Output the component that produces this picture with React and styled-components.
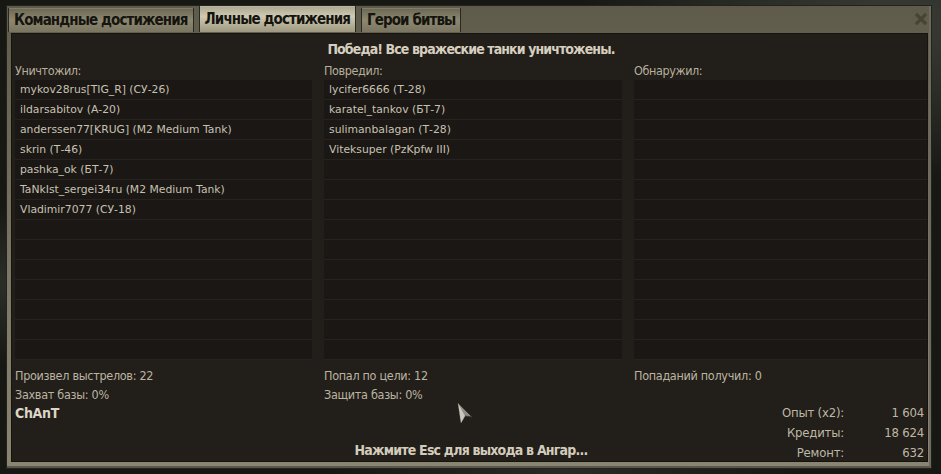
import React from 'react';
import styled, { createGlobalStyle } from 'styled-components';

const GlobalStyle = createGlobalStyle`
    html, body {
        margin: 0;
        padding: 0;
        width: 941px;
        height: 474px;
        overflow: hidden;
        background: #1a1b17;
    }
`;

const condensed = `"DejaVu Sans Condensed", "DejaVu Sans", sans-serif`;

const Page = styled.div`
    width: 941px;
    height: 474px;
    box-sizing: border-box;
    padding: 6px 10px 6px 7px;
    background:
        radial-gradient(ellipse at 95% 5%, #3a3d35 0%, transparent 25%),
        radial-gradient(ellipse at 2% 60%, #2c2e28 0%, transparent 20%),
        radial-gradient(ellipse at 60% 100%, #2a2b25 0%, transparent 30%),
        #171814;
`;

const Window = styled.div`
    position: relative;
    height: 100%;
    display: flex;
    flex-direction: column;
    box-sizing: border-box;
    background: linear-gradient(#5f5b4a, #7d7865 60%, #8a8571);
    border-right: 2px solid #6e6a5e;
    border-bottom: 2px solid #5a574e;
    box-shadow: 0 0 0 1px #23221d;
`;

const TabBar = styled.div`
    height: 26px;
    display: flex;
    align-items: flex-end;
    gap: 5px;
    padding: 0 0 0 1px;
    position: relative;
`;

const Tab = styled.div`
    height: ${(p) => (p.$active ? '26px' : '24px')};
    box-sizing: border-box;
    padding: 0 5px;
    display: flex;
    align-items: center;
    font-family: ${condensed};
    font-weight: bold;
    font-size: 15px;
    letter-spacing: -0.9px;
    color: #15140f;
    background: ${(p) =>
        p.$active
            ? 'linear-gradient(#a9a58f, #cfcab3 40%, #9d987f)'
            : 'linear-gradient(#6a6653, #8c8770 50%, #7a7561)'};
    border-left: 1px solid #2a2820;
    border-right: 1px solid #2a2820;
    box-shadow: inset 0 1px 0 rgba(255, 255, 240, 0.15);
`;

const Close = styled.div`
    margin-left: auto;
    align-self: center;
    margin-right: 1px;
    width: 14px;
    height: 14px;
    display: flex;
    align-items: center;
    justify-content: center;
`;

const Panel = styled.div`
    flex: 1;
    margin: 1px 1px 4px 4px;
    background: #221e19;
    border: 1px solid #151310;
    display: flex;
    flex-direction: column;
    padding: 0 0 0 3px;
    min-height: 0;
`;

const Title = styled.div`
    text-align: center;
    font-family: ${condensed};
    font-weight: bold;
    font-size: 14px;
    letter-spacing: -0.9px;
    color: #d6cfbf;
    height: 20px;
    line-height: 20px;
    margin-top: 5px;
`;

const Columns = styled.div`
    display: grid;
    grid-template-columns: 297px 298px 1fr;
    column-gap: 12px;
    margin-top: 2px;
`;

const Column = styled.div`
    display: flex;
    flex-direction: column;
`;

const Header = styled.div`
    font-family: ${condensed};
    font-size: 12.5px;
    letter-spacing: -0.4px;
    color: #b7af9d;
    height: 19px;
    line-height: 19px;
`;

const List = styled.div`
    display: flex;
    flex-direction: column;
    background: #26221d;
`;

const Row = styled.div`
    height: 19px;
    line-height: 19px;
    margin-bottom: 1px;
    background: #1a1714;
    padding-left: 5px;
    font-family: "DejaVu Sans", sans-serif;
    font-size: 10.8px;
    color: #c8c1b2;
    white-space: nowrap;
`;

const Stats = styled.div`
    display: grid;
    grid-template-columns: 297px 298px 1fr;
    column-gap: 12px;
    margin-top: 6px;
`;

const Stat = styled.div`
    font-family: ${condensed};
    font-size: 12.5px;
    letter-spacing: -0.3px;
    color: #bcb4a2;
    height: 19px;
    line-height: 19px;
`;

const Footer = styled.div`
    flex: 1;
    display: grid;
    grid-template-columns: 1fr auto 1fr;
    align-items: start;
`;

const Player = styled.div`
    font-family: ${condensed};
    font-weight: bold;
    font-size: 14px;
    letter-spacing: -0.3px;
    color: #ddd6c6;
    line-height: 18px;
`;

const Hint = styled.div`
    align-self: end;
    margin-bottom: 5px;
    font-family: ${condensed};
    font-weight: bold;
    font-size: 14px;
    letter-spacing: -0.8px;
    color: #d3ccbc;
`;

const Rewards = styled.div`
    justify-self: end;
    display: grid;
    grid-template-columns: auto 80px;
    padding-right: 3px;
    margin-top: -1px;
`;

const Cell = styled.div`
    text-align: right;
    font-family: ${condensed};
    font-size: 13px;
    letter-spacing: -0.2px;
    color: #bfb7a6;
    height: 20px;
    line-height: 20px;
`;

const Cursor = styled.svg`
    position: absolute;
    left: 450px;
    top: 396px;
`;

const columns = [
    {
        title: 'Уничтожил:',
        rows: [
            'mykov28rus[TIG_R] (СУ-26)',
            'ildarsabitov (А-20)',
            'anderssen77[KRUG] (M2 Medium Tank)',
            'skrin (Т-46)',
            'pashka_ok (БТ-7)',
            'TaNkIst_sergei34ru (M2 Medium Tank)',
            'Vladimir7077 (СУ-18)',
        ],
    },
    {
        title: 'Повредил:',
        rows: [
            'lycifer6666 (Т-28)',
            'karatel_tankov (БТ-7)',
            'sulimanbalagan (Т-28)',
            'Viteksuper (PzKpfw III)',
        ],
    },
    { title: 'Обнаружил:', rows: [] },
];

const ROWS = 14;

const rewards = [
    ['Опыт (x2):', '1 604'],
    ['Кредиты:', '18 624'],
    ['Ремонт:', '632'],
];

const App = () => {
    return (
        <Page>
            <GlobalStyle />
            <Window>
                <TabBar>
                    <Tab>Командные достижения</Tab>
                    <Tab $active>Личные достижения</Tab>
                    <Tab>Герои битвы</Tab>
                    <Close>
                        <svg width="12" height="12" viewBox="0 0 12 12">
                            <path
                                d="M2 2 L10 10 M10 2 L2 10"
                                stroke="#474436"
                                strokeWidth="3.2"
                                strokeLinecap="square"
                            />
                        </svg>
                    </Close>
                </TabBar>
                <Panel>
                    <Title>Победа! Все вражеские танки уничтожены.</Title>
                    <Columns>
                        {columns.map((col) => (
                            <Column key={col.title}>
                                <Header>{col.title}</Header>
                                <List>
                                    {Array.from({ length: ROWS }).map((_, i) => (
                                        <Row key={i}>{col.rows[i] || ''}</Row>
                                    ))}
                                </List>
                            </Column>
                        ))}
                    </Columns>
                    <Stats>
                        <div>
                            <Stat>Произвел выстрелов: 22</Stat>
                            <Stat>Захват базы: 0%</Stat>
                        </div>
                        <div>
                            <Stat>Попал по цели: 12</Stat>
                            <Stat>Защита базы: 0%</Stat>
                        </div>
                        <div>
                            <Stat>Попаданий получил: 0</Stat>
                        </div>
                    </Stats>
                    <Footer>
                        <Player>ChAnT</Player>
                        <Hint>Нажмите Esc для выхода в Ангар...</Hint>
                        <Rewards>
                            {rewards.map(([label, value]) => (
                                <React.Fragment key={label}>
                                    <Cell>{label}</Cell>
                                    <Cell>{value}</Cell>
                                </React.Fragment>
                            ))}
                        </Rewards>
                    </Footer>
                </Panel>
                <Cursor width="16" height="22" viewBox="0 0 16 22">
                    <polygon points="1,1 15,15 8,14 4,21" fill="#8f8c84" stroke="#3a3934" strokeWidth="1" />
                    <polygon points="1,1 8,14 4,21" fill="#c9c6bd" />
                </Cursor>
            </Window>
        </Page>
    );
};

export default App;
